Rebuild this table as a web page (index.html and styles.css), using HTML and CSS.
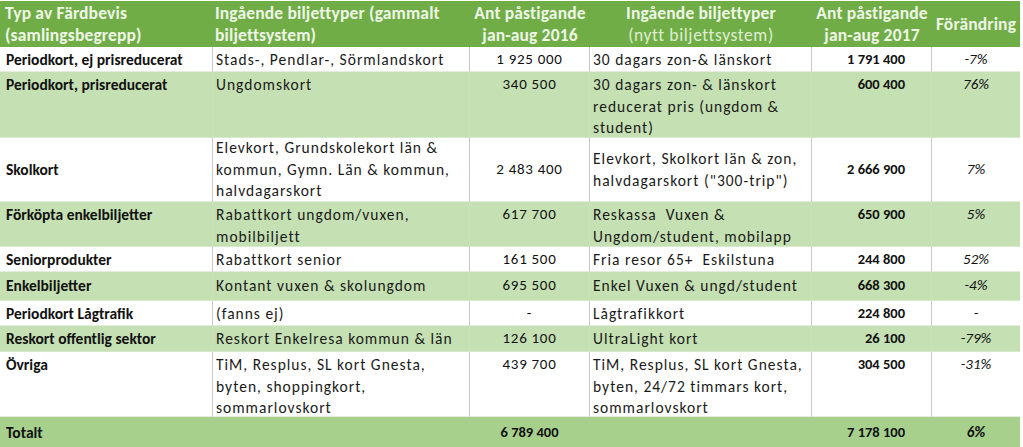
FILE: index.html
```html
<!DOCTYPE html>
<html lang="sv">
<head>
<meta charset="utf-8">
<title>Färdbevis</title>
<link rel="stylesheet" href="styles.css">
</head>
<body>
<div class="sheet">
  <div class="row head">
    <div class="cell left first">Typ av Färdbevis<br>(samlingsbegrepp)</div>
    <div class="cell left">Ingående biljettyper (gammalt<br>biljettsystem)</div>
    <div class="cell">Ant påstigande<br>jan-aug 2016</div>
    <div class="cell">Ingående biljettyper<br><span class="light">(nytt biljettsystem)</span></div>
    <div class="cell">Ant påstigande<br>jan-aug 2017</div>
    <div class="cell">Förändring</div>
  </div>

  <div class="row white">
    <div class="cell name">Periodkort, ej prisreducerat</div>
    <div class="cell txt">Stads-, Pendlar-, Sörmlandskort</div>
    <div class="cell num">1 925 000</div>
    <div class="cell txt">30 dagars zon-&amp; länskort</div>
    <div class="cell bnum">1 791 400</div>
    <div class="cell pct">-7%</div>
  </div>
  <div class="row green">
    <div class="cell name">Periodkort, prisreducerat</div>
    <div class="cell txt">Ungdomskort</div>
    <div class="cell num">340 500</div>
    <div class="cell txt">30 dagars zon- &amp; länskort reducerat pris (ungdom &amp; student)</div>
    <div class="cell bnum">600 400</div>
    <div class="cell pct">76%</div>
  </div>
  <div class="row white mid">
    <div class="cell name">Skolkort</div>
    <div class="cell txt">Elevkort, Grundskolekort län &amp; kommun, Gymn. Län &amp; kommun, halvdagarskort</div>
    <div class="cell num">2 483 400</div>
    <div class="cell txt">Elevkort, Skolkort län &amp; zon, halvdagarskort ("300-trip")</div>
    <div class="cell bnum">2 666 900</div>
    <div class="cell pct">7%</div>
  </div>
  <div class="row green">
    <div class="cell name">Förköpta enkelbiljetter</div>
    <div class="cell txt">Rabattkort ungdom/vuxen, mobilbiljett</div>
    <div class="cell num">617 700</div>
    <div class="cell txt">Reskassa&nbsp; Vuxen &amp; Ungdom/student, mobilapp</div>
    <div class="cell bnum">650 900</div>
    <div class="cell pct">5%</div>
  </div>
  <div class="row white">
    <div class="cell name">Seniorprodukter</div>
    <div class="cell txt">Rabattkort senior</div>
    <div class="cell num">161 500</div>
    <div class="cell txt">Fria resor 65+&nbsp; Eskilstuna</div>
    <div class="cell bnum">244 800</div>
    <div class="cell pct">52%</div>
  </div>
  <div class="row green tall1">
    <div class="cell name">Enkelbiljetter</div>
    <div class="cell txt">Kontant vuxen &amp; skolungdom</div>
    <div class="cell num">695 500</div>
    <div class="cell txt">Enkel Vuxen &amp; ungd/student</div>
    <div class="cell bnum">668 300</div>
    <div class="cell pct">-4%</div>
  </div>
  <div class="row white">
    <div class="cell name">Periodkort Lågtrafik</div>
    <div class="cell txt">(fanns ej)</div>
    <div class="cell num">-</div>
    <div class="cell txt">Lågtrafikkort</div>
    <div class="cell bnum">224 800</div>
    <div class="cell pct">-</div>
  </div>
  <div class="row green">
    <div class="cell name">Reskort offentlig sektor</div>
    <div class="cell txt">Reskort Enkelresa kommun &amp; län</div>
    <div class="cell num">126 100</div>
    <div class="cell txt">UltraLight kort</div>
    <div class="cell bnum">26 100</div>
    <div class="cell pct">-79%</div>
  </div>
  <div class="row white">
    <div class="cell name">Övriga</div>
    <div class="cell txt">TiM, Resplus, SL kort Gnesta, byten, shoppingkort, sommarlovskort</div>
    <div class="cell num">439 700</div>
    <div class="cell txt">TiM, Resplus, SL kort Gnesta, byten, 24/72 timmars kort, sommarlovskort</div>
    <div class="cell bnum">304 500</div>
    <div class="cell pct">-31%</div>
  </div>
  <div class="row total">
    <div class="cell name">Totalt</div>
    <div class="cell"></div>
    <div class="cell bnum c">6 789 400</div>
    <div class="cell"></div>
    <div class="cell bnum">7 178 100</div>
    <div class="cell pct">6%</div>
  </div>
</div>
</body>
</html>
```

FILE: styles.css
```css
html, body {
  margin: 0;
  padding: 0;
  background: #ffffff;
}
body {
  font-family: "Carlito", "Lato", "Liberation Sans", sans-serif;
  font-size: 15.5px;
  color: #111111;
}
.sheet {
  display: grid;
  grid-template-columns: 213px 257px 120px 222px 120px 88px;
  grid-template-rows: 46px 25px 66px 64px 45px 25px 29px 25px 26px 65px 30px;
  width: 1020px;
  margin-top: 1px;
}
.row { display: contents; }
.cell {
  box-sizing: border-box;
  padding: 1px 3px 0 3px;
  line-height: 21.5px;
  overflow: hidden;
  border-right: 1px solid #c8c8c8;
  border-bottom: 1px solid #e4ecde;
}
.cell:last-child { border-right: none; }

/* header */
.head .cell {
  background: #70ad46;
  color: #eef5e6;
  font-weight: 700;
  font-size: 17.5px;
  letter-spacing: 0.15px;
  line-height: 22px;
  text-align: center;
  white-space: nowrap;
  border: none;
  padding: 0 2px;
  display: flex;
  flex-direction: column;
  justify-content: center;
}
.head .cell.left { text-align: left; }
.head .cell.first { padding-left: 5px; }
.head .light {
  font-weight: 400;
  color: #dfeed3;
  letter-spacing: 0.6px;
}

/* row colours */
.white .cell { background: #ffffff; }
.green .cell {
  background: #c5e0b3;
  border-right-color: #cbe3bb;
  border-bottom-color: #d6e9ca;
}
.total .cell {
  background: #a8d08d;
  border-right-color: #a8d08d;
  border-bottom: none;
  font-weight: 700;
  display: flex;
  align-items: center;
  padding-top: 2px;
}
.total .cell.bnum { justify-content: flex-end; }
.total .cell.bnum.c { justify-content: center; }
.total .cell.pct { justify-content: center; }

.cell { padding-top: 2px; }
.tall1 .cell { padding-top: 3px; }
.mid .cell {
  display: flex;
  flex-direction: column;
  justify-content: center;
  padding-top: 0;
}

.name {
  font-weight: 700;
  padding-left: 6px;
  white-space: nowrap;
}
.txt {
  letter-spacing: 1px;
  color: #1a1a1a;
}
.num {
  text-align: center;
  font-size: 15px;
  letter-spacing: 0.7px;
}
.mid .num, .mid .pct { align-items: center; }
.mid .bnum { align-items: flex-end; }
.bnum {
  font-weight: 700;
  font-size: 14.5px;
  text-align: right;
  padding-right: 26px;
}
.bnum.c { text-align: center; padding-right: 3px; }
.pct {
  font-style: italic;
  font-size: 15px;
  text-align: center;
}
```
